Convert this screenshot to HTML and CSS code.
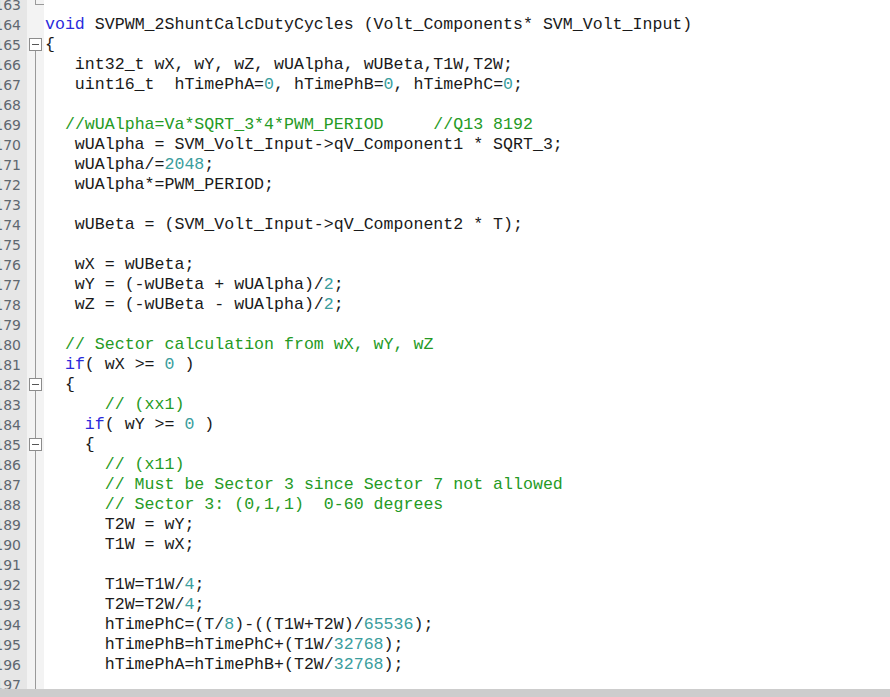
FILE: index.html
```html
<!DOCTYPE html>
<html lang="en">
<head>
    <meta charset="UTF-8">
    <meta name="viewport" content="width=device-width, initial-scale=1.0">
    <title>SVPWM_2ShuntCalcDutyCycles</title>
    <link rel="stylesheet" href="styles.css">
</head>
<body>
    <div class="editor">
        <div class="lines">
            <div class="row"><span class="ln">163</span><span class="fold fold-end"></span><span class="code"></span></div>
            <div class="row"><span class="ln">164</span><span class="fold"></span><span class="code"><span class="kw">void</span> SVPWM_2ShuntCalcDutyCycles (Volt_Components* SVM_Volt_Input)</span></div>
            <div class="row"><span class="ln">165</span><span class="fold fold-box first"><span class="box"></span></span><span class="code">{</span></div>
            <div class="row"><span class="ln">166</span><span class="fold fold-line"></span><span class="code">   int32_t wX, wY, wZ, wUAlpha, wUBeta,T1W,T2W;</span></div>
            <div class="row"><span class="ln">167</span><span class="fold fold-line"></span><span class="code">   uint16_t  hTimePhA=<span class="nu">0</span>, hTimePhB=<span class="nu">0</span>, hTimePhC=<span class="nu">0</span>;</span></div>
            <div class="row"><span class="ln">168</span><span class="fold fold-line"></span><span class="code"></span></div>
            <div class="row"><span class="ln">169</span><span class="fold fold-line"></span><span class="code">  <span class="cm">//wUAlpha=Va*SQRT_3*4*PWM_PERIOD     //Q13 8192</span></span></div>
            <div class="row"><span class="ln">170</span><span class="fold fold-line"></span><span class="code">   wUAlpha = SVM_Volt_Input-&gt;qV_Component1 * SQRT_3;</span></div>
            <div class="row"><span class="ln">171</span><span class="fold fold-line"></span><span class="code">   wUAlpha/=<span class="nu">2048</span>;</span></div>
            <div class="row"><span class="ln">172</span><span class="fold fold-line"></span><span class="code">   wUAlpha*=PWM_PERIOD;</span></div>
            <div class="row"><span class="ln">173</span><span class="fold fold-line"></span><span class="code"></span></div>
            <div class="row"><span class="ln">174</span><span class="fold fold-line"></span><span class="code">   wUBeta = (SVM_Volt_Input-&gt;qV_Component2 * T);</span></div>
            <div class="row"><span class="ln">175</span><span class="fold fold-line"></span><span class="code"></span></div>
            <div class="row"><span class="ln">176</span><span class="fold fold-line"></span><span class="code">   wX = wUBeta;</span></div>
            <div class="row"><span class="ln">177</span><span class="fold fold-line"></span><span class="code">   wY = (-wUBeta + wUAlpha)/<span class="nu">2</span>;</span></div>
            <div class="row"><span class="ln">178</span><span class="fold fold-line"></span><span class="code">   wZ = (-wUBeta - wUAlpha)/<span class="nu">2</span>;</span></div>
            <div class="row"><span class="ln">179</span><span class="fold fold-line"></span><span class="code"></span></div>
            <div class="row"><span class="ln">180</span><span class="fold fold-line"></span><span class="code">  <span class="cm">// Sector calculation from wX, wY, wZ</span></span></div>
            <div class="row"><span class="ln">181</span><span class="fold fold-line"></span><span class="code">  <span class="kw">if</span>( wX &gt;= <span class="nu">0</span> )</span></div>
            <div class="row"><span class="ln">182</span><span class="fold fold-box"><span class="box"></span></span><span class="code">  {</span></div>
            <div class="row"><span class="ln">183</span><span class="fold fold-line"></span><span class="code">      <span class="cm">// (xx1)</span></span></div>
            <div class="row"><span class="ln">184</span><span class="fold fold-line"></span><span class="code">    <span class="kw">if</span>( wY &gt;= <span class="nu">0</span> )</span></div>
            <div class="row"><span class="ln">185</span><span class="fold fold-box"><span class="box"></span></span><span class="code">    {</span></div>
            <div class="row"><span class="ln">186</span><span class="fold fold-line"></span><span class="code">      <span class="cm">// (x11)</span></span></div>
            <div class="row"><span class="ln">187</span><span class="fold fold-line"></span><span class="code">      <span class="cm">// Must be Sector 3 since Sector 7 not allowed</span></span></div>
            <div class="row"><span class="ln">188</span><span class="fold fold-line"></span><span class="code">      <span class="cm">// Sector 3: (0,1,1)  0-60 degrees</span></span></div>
            <div class="row"><span class="ln">189</span><span class="fold fold-line"></span><span class="code">      T2W = wY;</span></div>
            <div class="row"><span class="ln">190</span><span class="fold fold-line"></span><span class="code">      T1W = wX;</span></div>
            <div class="row"><span class="ln">191</span><span class="fold fold-line"></span><span class="code"></span></div>
            <div class="row"><span class="ln">192</span><span class="fold fold-line"></span><span class="code">      T1W=T1W/<span class="nu">4</span>;</span></div>
            <div class="row"><span class="ln">193</span><span class="fold fold-line"></span><span class="code">      T2W=T2W/<span class="nu">4</span>;</span></div>
            <div class="row"><span class="ln">194</span><span class="fold fold-line"></span><span class="code">      hTimePhC=(T/<span class="nu">8</span>)-((T1W+T2W)/<span class="nu">65536</span>);</span></div>
            <div class="row"><span class="ln">195</span><span class="fold fold-line"></span><span class="code">      hTimePhB=hTimePhC+(T1W/<span class="nu">32768</span>);</span></div>
            <div class="row"><span class="ln">196</span><span class="fold fold-line"></span><span class="code">      hTimePhA=hTimePhB+(T2W/<span class="nu">32768</span>);</span></div>
            <div class="row"><span class="ln">197</span><span class="fold fold-line"></span><span class="code"></span></div>
        </div>
    </div>
    <div class="hscroll"></div>
</body>
</html>
```

FILE: styles.css
```css
body {
    margin: 0;
    height: 697px;
    overflow: hidden;
    display: flex;
    flex-direction: column;
    background: #fff;
}

.editor {
    flex: 1;
    overflow: hidden;
    background: #fff;
}

.lines {
    margin-top: -6px;
}

.row {
    display: flex;
    height: 20px;
}

/* line numbers */
.ln {
    width: 27px;
    flex-shrink: 0;
    box-sizing: border-box;
    padding-right: 6px;
    display: flex;
    justify-content: flex-end;
    align-items: center;
    overflow: hidden;
    background: #e6e6e6;
    color: #5f6870;
    font-family: 'DejaVu Sans', sans-serif;
    font-size: 14px;
    line-height: 20px;
    padding-top: 1px;
}

/* fold margin */
.fold {
    width: 17px;
    flex-shrink: 0;
    display: flex;
    align-items: center;
    background-color: #f3f3f3;
    background-repeat: no-repeat;
}

.fold-line {
    background-image: linear-gradient(#9a9a9a, #9a9a9a);
    background-position: 8px 0;
    background-size: 1px 100%;
}

.fold-end {
    background-image: linear-gradient(#9a9a9a, #9a9a9a), linear-gradient(#9a9a9a, #9a9a9a);
    background-position: 8px 0, 8px 10px;
    background-size: 1px 10px, 9px 1px;
}

.fold-box {
    background-image: linear-gradient(#9a9a9a, #9a9a9a);
    background-position: 8px 0;
    background-size: 1px 100%;
}

.fold-box.first {
    background-position: 8px 100%;
    background-size: 1px 50%;
}

.box {
    width: 13px;
    height: 13px;
    box-sizing: border-box;
    margin-left: 2px;
    border: 1px solid #8c8c8c;
    background: #fff;
    display: flex;
    align-items: center;
    justify-content: center;
}

.box::before {
    content: '';
    width: 7px;
    height: 1px;
    background: #555;
}

/* code */
.code {
    flex: 1;
    padding-left: 1px;
    white-space: pre;
    font-family: 'Liberation Mono', 'Courier New', monospace;
    font-size: 16.6px;
    line-height: 20px;
    color: #1a1a1a;
    padding-top: 1px;
}

.kw {
    color: #2b2bdc;
}

.cm {
    color: #259a25;
}

.nu {
    color: #3a9d9d;
}

.hscroll {
    height: 8px;
    flex-shrink: 0;
    background: #cdcdcd;
}
```
